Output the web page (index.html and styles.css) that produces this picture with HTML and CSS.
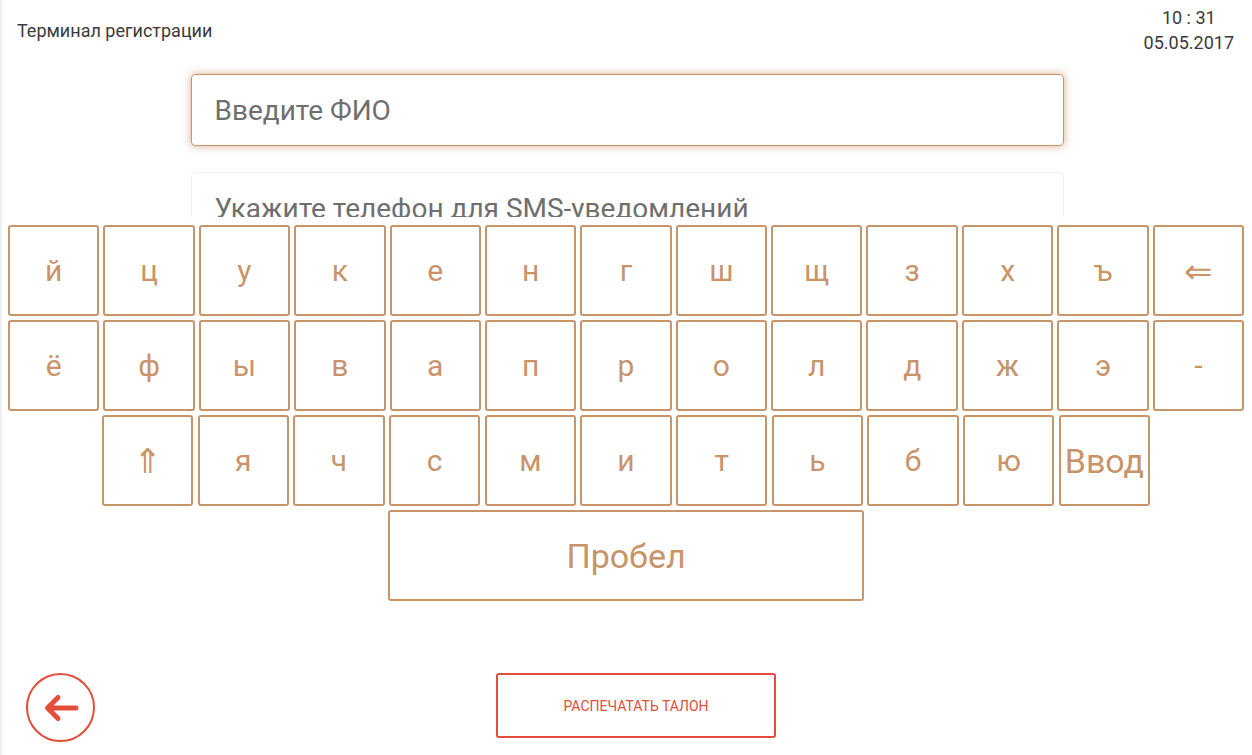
FILE: index.html
```html
<!DOCTYPE html>
<html lang="ru">
<head>
    <meta charset="UTF-8">
    <meta name="viewport" content="width=device-width, initial-scale=1.0">
    <title>Терминал регистрации</title>
    <link rel="stylesheet" href="styles.css">
</head>
<body>

    <div class="screen">
        <div class="header">
            <div class="title">Терминал регистрации</div>
            <div class="clock">
                <div>10 : 31</div>
                <div>05.05.2017</div>
            </div>
        </div>

        <div class="form">
            <div class="field active">Введите ФИО</div>
            <div class="field">Укажите телефон для SMS-уведомлений</div>
        </div>

        <div class="keyboard">
            <div class="kb-row">
                <div class="key">й</div>
                <div class="key">ц</div>
                <div class="key">у</div>
                <div class="key">к</div>
                <div class="key">е</div>
                <div class="key">н</div>
                <div class="key">г</div>
                <div class="key">ш</div>
                <div class="key">щ</div>
                <div class="key">з</div>
                <div class="key">х</div>
                <div class="key">ъ</div>
                <div class="key arrow">&lArr;</div>
            </div>
            <div class="kb-row">
                <div class="key">ё</div>
                <div class="key">ф</div>
                <div class="key">ы</div>
                <div class="key">в</div>
                <div class="key">а</div>
                <div class="key">п</div>
                <div class="key">р</div>
                <div class="key">о</div>
                <div class="key">л</div>
                <div class="key">д</div>
                <div class="key">ж</div>
                <div class="key">э</div>
                <div class="key">-</div>
            </div>
            <div class="kb-row wide">
                <div class="key arrow">&uArr;</div>
                <div class="key">я</div>
                <div class="key">ч</div>
                <div class="key">с</div>
                <div class="key">м</div>
                <div class="key">и</div>
                <div class="key">т</div>
                <div class="key">ь</div>
                <div class="key">б</div>
                <div class="key">ю</div>
                <div class="key big">Ввод</div>
            </div>
            <div class="kb-row">
                <div class="key big space">Пробел</div>
            </div>
        </div>

        <div class="footer">
            <button class="back-btn">
                <svg width="64" height="64" viewBox="0 0 64 64">
                    <path d="M47 32 H19 M29 21.5 L18.5 32 L29 42.5" fill="none" stroke="#e24e39" stroke-width="5" stroke-linecap="round" stroke-linejoin="round"/>
                </svg>
            </button>
            <button class="print-btn">РАСПЕЧАТАТЬ ТАЛОН</button>
        </div>
    </div>

</body>
</html>
```

FILE: styles.css
```css
body {
    margin: 0;
    padding: 0;
    font-family: Roboto, "Liberation Sans", sans-serif;
    background-color: #fff;
    color: #333;
}
.screen {
    position: relative;
    height: 755px;
    box-sizing: border-box;
    border-left: 2px solid #f0f0f0;
    display: flex;
    flex-direction: column;
}
.header {
    display: flex;
    justify-content: space-between;
    align-items: center;
    padding: 5px 18px 0 15px;
    font-size: 18px;
    line-height: 25px;
    color: #3a3a3a;
}
.clock {
    text-align: center;
}
.form {
    width: 873px;
    margin: 19px auto 0;
}
.field {
    height: 72px;
    box-sizing: border-box;
    border: 1px solid #f0f0f0;
    border-radius: 4px;
    padding: 0 23px;
    display: flex;
    align-items: center;
    font-size: 28px;
    color: #6f6f6f;
    margin-bottom: 26px;
}
.field.active {
    border-color: #c8946a;
    box-shadow: 0 0 8px rgba(200, 140, 100, 0.7);
}
.keyboard {
    position: absolute;
    top: 217px;
    left: 0;
    right: 0;
    background-color: #fff;
    padding: 8px 8px 0 6px;
    display: flex;
    flex-direction: column;
    gap: 4px;
}
.kb-row {
    display: flex;
    justify-content: center;
    gap: 4px;
}
.kb-row.wide {
    gap: 4.3px;
}
.key {
    width: 91.4px;
    height: 91px;
    box-sizing: border-box;
    border: 2px solid #c8946a;
    border-radius: 3px;
    display: flex;
    align-items: center;
    justify-content: center;
    font-size: 30px;
    color: #c8946a;
}
.key.arrow {
    font-family: "DejaVu Sans", sans-serif;
    font-size: 34px;
}
.key.big {
    font-size: 34px;
}
.key.space {
    width: 476px;
}
.footer {
    margin-top: auto;
    display: flex;
    align-items: flex-start;
    padding: 0 0 13px 24px;
}
.back-btn {
    width: 69px;
    height: 69px;
    padding: 0;
    border: 2px solid #e24e39;
    border-radius: 50%;
    background: #fff;
    display: flex;
    align-items: center;
    justify-content: center;
    cursor: pointer;
}
.print-btn {
    margin-left: 401px;
    width: 280px;
    height: 65px;
    border: 2px solid #e24e39;
    border-radius: 3px;
    background: #fff;
    color: #e24e39;
    font-family: Roboto, "Liberation Sans", sans-serif;
    font-size: 14px;
    cursor: pointer;
}
```
